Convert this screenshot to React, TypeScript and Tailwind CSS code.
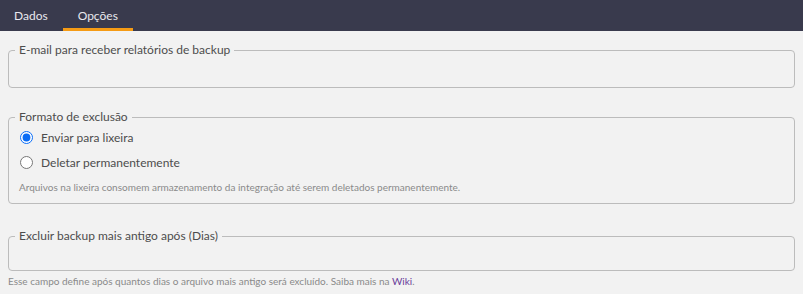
export default function App() {
  return (
    <div className="min-h-screen bg-[#f2f2f2] font-['Lato',sans-serif]">
      {/* Tabs */}
      <div className="flex h-[31px] bg-[#393a4d] pl-[5px]">
        <div className="flex items-center px-[9px] text-[12px] text-[#e8e8ee]">Dados</div>
        <div className="ml-[6px] flex items-center border-b-[3px] border-[#f59b15] px-[15px] pt-[3px] text-[12px] text-[#e8e8ee]">
          Opções
        </div>
      </div>

      <div className="px-[8px] pt-[11px]">
        <fieldset className="rounded-[4px] border border-[#bcbcbc] px-[6px]">
          <legend className="px-1 text-[12px] leading-4 text-[#4d4d4d]">E-mail para receber relatórios de backup</legend>
          <div className="h-[29px]" />
        </fieldset>

        <fieldset className="mt-[21px] rounded-[4px] border border-[#bcbcbc] px-[6px] pb-[9px]">
          <legend className="px-1 text-[12px] leading-4 text-[#4d4d4d]">Formato de exclusão</legend>
          <label className="flex h-[25px] items-center">
            <input type="radio" name="fmt" defaultChecked className="ml-[5px] h-[13px] w-[13px] accent-[#0a6cf5]" />
            <span className="ml-[8px] text-[12px] text-[#4d4d4d]">Enviar para lixeira</span>
          </label>
          <label className="flex h-[25px] items-center">
            <input type="radio" name="fmt" className="ml-[5px] h-[13px] w-[13px] accent-[#0a6cf5]" />
            <span className="ml-[8px] text-[12px] text-[#4d4d4d]">Deletar permanentemente</span>
          </label>
          <p className="mt-[5px] pl-[4px] text-[10px] leading-[14px] text-[#8a8a8a]">
            Arquivos na lixeira consomem armazenamento da integração até serem deletados permanentemente.
          </p>
        </fieldset>

        <fieldset className="mt-[24px] rounded-[4px] border border-[#bcbcbc] px-[6px]">
          <legend className="px-1 text-[12px] leading-4 text-[#4d4d4d]">Excluir backup mais antigo após (Dias)</legend>
          <div className="h-[26px]" />
        </fieldset>
        <p className="mt-[3px] text-[10px] leading-[14px] text-[#8a8a8a]">
          Esse campo define após quantos dias o arquivo mais antigo será excluído. Saiba mais na{' '}
          <a className="text-[#6a3d9a]">Wiki</a>.
        </p>
      </div>
    </div>
  );
}
